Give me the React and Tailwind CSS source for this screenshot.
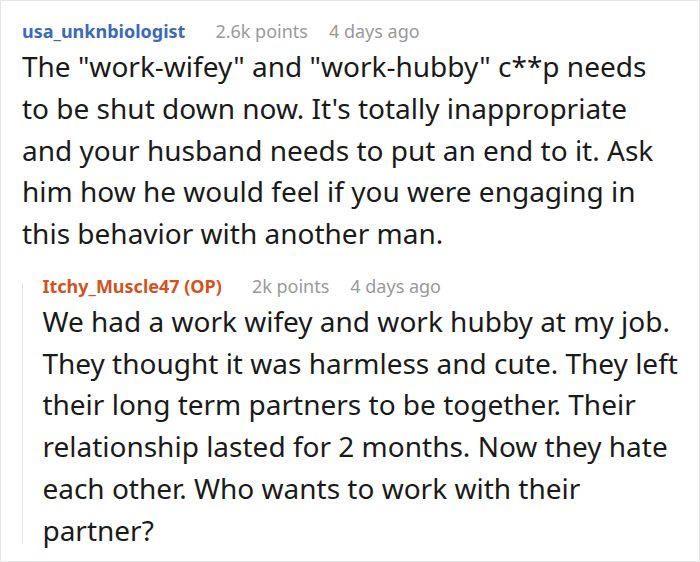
export default function App() {
  return (
    <div
      className="w-[700px] h-[562px] bg-white border border-[#e6e6e6] overflow-hidden text-[#1a1a1a]"
      style={{ fontFamily: '"Noto Sans", "Open Sans", sans-serif' }}
    >
      <div className="pl-[21px] pr-[6px] pt-[15px]">
        <div className="flex items-baseline h-[30px] text-[18px] leading-[30px]">
          <span className="font-bold text-[#3a6ab8]">usa_unknbiologist</span>
          <span className="ml-[30px] text-[#999999]">2.6k points</span>
          <span className="ml-[21px] text-[#999999]">4 days ago</span>
        </div>
        <p className="text-[28px] leading-[41.75px] w-[650px]">
          The "work-wifey" and "work-hubby" c**p needs to be shut down now. It's totally inappropriate and your husband needs to put an end to it. Ask him how he would feel if you were engaging in this behavior with another man.
        </p>
        <div className="mt-[16px] flex">
          <div className="w-[2px] bg-[#e5e5e5] mt-[12px] mb-[8px]"></div>
          <div className="pl-[20px]">
            <div className="flex items-baseline h-[30px] text-[18px] leading-[30px]">
              <span className="font-bold text-[#d4521e]">Itchy_Muscle47 (OP)</span>
              <span className="ml-[30px] text-[#999999]">2k points</span>
              <span className="ml-[21px] text-[#999999]">4 days ago</span>
            </div>
            <p className="text-[28px] leading-[41.75px]">
              We had a work wifey and work hubby at my job. They thought it was harmless and cute. They left their long term partners to be together. Their relationship lasted for 2 months. Now they hate each other. Who wants to work with their partner?
            </p>
          </div>
        </div>
      </div>
    </div>
  );
}
